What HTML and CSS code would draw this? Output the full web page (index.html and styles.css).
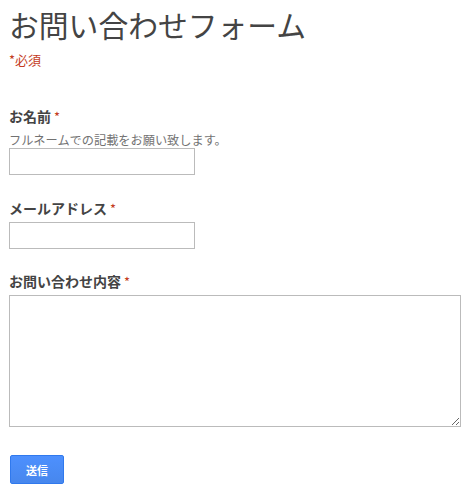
FILE: index.html
```html
<!DOCTYPE html>
<html lang="ja">
<head>
<meta charset="utf-8">
<title>お問い合わせフォーム</title>
<link rel="stylesheet" href="styles.css">
</head>
<body>
<form class="form">
  <h1 class="title">お問い合わせフォーム</h1>
  <div class="required-note"><span class="star">*</span>必須</div>

  <div class="item item-first">
    <label class="label">お名前<span class="star">*</span></label>
    <div class="help">フルネームでの記載をお願い致します。</div>
    <input class="input" type="text">
  </div>

  <div class="item">
    <label class="label">メールアドレス<span class="star">*</span></label>
    <input class="input" type="text">
  </div>

  <div class="item item-message">
    <label class="label">お問い合わせ内容<span class="star">*</span></label>
    <textarea class="textarea"></textarea>
  </div>

  <div class="actions">
    <button class="submit" type="button">送信</button>
  </div>
</form>
</body>
</html>
```

FILE: styles.css
```css
html, body {
  margin: 0;
  padding: 0;
  background: #fff;
}
body {
  font-family: "Noto Sans CJK JP", "Liberation Sans", sans-serif;
  color: #444;
}
.form {
  display: flex;
  flex-direction: column;
  padding: 0 9px;
}
.title {
  margin: 4px 0 0 0;
  font-size: 29.8px;
  font-weight: normal;
  line-height: 40px;
  color: #444;
  letter-spacing: 0;
}
.required-note {
  font-size: 13px;
  line-height: 18px;
  color: #c43b1d;
  margin-top: 7px;
}
.star {
  color: #c43b1d;
  margin-left: 3px;
  font-size: 13px;
  font-weight: normal;
}
.required-note .star {
  margin-left: 0;
}
.item {
  display: flex;
  flex-direction: column;
  align-items: flex-start;
  margin-top: 24px;
}
.item-first {
  margin-top: 38px;
}
.item-message {
  margin-top: 23px;
}
.label {
  font-size: 14px;
  font-weight: bold;
  line-height: 18px;
  color: #444;
  margin-bottom: 4px;
}
.help {
  font-size: 12.2px;
  line-height: 16px;
  color: #727272;
  margin-top: 2px;
  margin-bottom: 0;
}
.input {
  box-sizing: border-box;
  width: 186px;
  height: 27px;
  border: 1px solid #bbb;
  margin: 0;
  padding: 2px 4px;
}
.textarea {
  box-sizing: border-box;
  width: 452px;
  height: 132px;
  border: 1px solid #bbb;
  margin: 0;
  padding: 2px 4px;
  resize: both;
}
.actions {
  margin-top: 28px;
  padding-left: 1px;
}
.submit {
  box-sizing: border-box;
  width: 54px;
  height: 29px;
  border: 1px solid #3079ed;
  border-radius: 2px;
  background: linear-gradient(#4d90fe, #4787ed);
  color: #fff;
  font-family: "Noto Sans CJK JP", sans-serif;
  font-size: 11px;
  font-weight: bold;
  padding: 0;
}
```
